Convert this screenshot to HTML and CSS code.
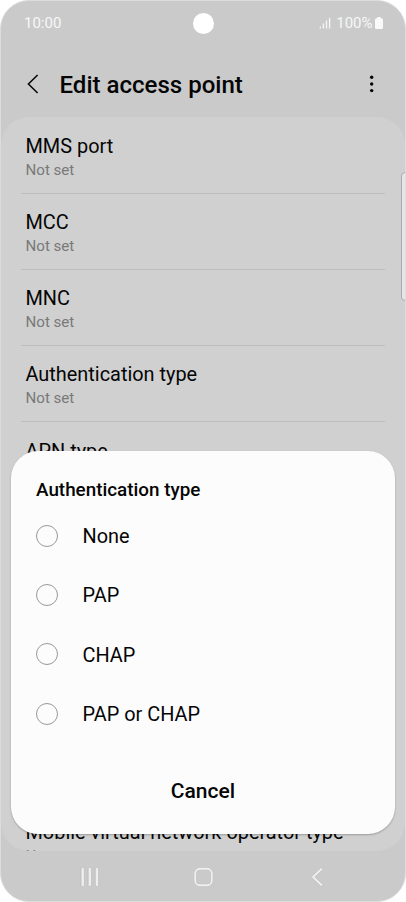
FILE: index.html
```
<!DOCTYPE html>
<html lang="en">
<head>
<meta charset="utf-8">
<title>Edit access point</title>
<link rel="stylesheet" href="styles.css">
</head>
<body>
<div class="phone">
  <header class="status">
    <span class="clock">10:00</span>
    <span class="camera"></span>
    <span class="indicators">
      <svg class="signal" width="12" height="12" viewBox="0 0 12 12"><path d="M1.3 9.5V11.500M4.400 6.500V11.500M7.500 3.500V11.500M10.600 0.800V11.500" stroke="#f7f7f7" stroke-width="1.3"/></svg>
      <span class="percent">100%</span>
      <svg class="battery" width="8" height="12" viewBox="0 0 8 12"><path d="M2.4 0h3.2v1.2H6.5A1.5 1.5 0 0 1 8 2.7v7.8A1.5 1.5 0 0 1 6.5 12h-5A1.5 1.5 0 0 1 0 10.5V2.7A1.5 1.5 0 0 1 1.5 1.2H2.4z" fill="#fafafa"/></svg>
    </span>
  </header>
  <div class="toolbar">
    <svg class="back" width="14" height="22" viewBox="0 0 14 22"><path d="M11.6 2L2.4 11l9.2 9" fill="none" stroke="#050505" stroke-width="1.5"/></svg>
    <h1>Edit access point</h1>
    <svg class="more" width="6" height="18" viewBox="0 0 6 18"><g fill="#050505"><circle cx="2.700" cy="2.3" r="1.7"/><circle cx="2.700" cy="9" r="1.7"/><circle cx="2.700" cy="15.6" r="1.7"/></g></svg>
  </div>
  <main class="list">
    <div class="row"><span class="name">MMS port</span><span class="value">Not set</span></div>
    <div class="row"><span class="name">MCC</span><span class="value">Not set</span></div>
    <div class="row"><span class="name">MNC</span><span class="value">Not set</span></div>
    <div class="row"><span class="name">Authentication type</span><span class="value">Not set</span></div>
    <div class="row"><span class="name">APN type</span></div>
    <div class="row"></div>
    <div class="row"></div>
    <div class="row"></div>
    <div class="row"></div>
    <div class="row"><span class="name">Mobile virtual network operator type</span><span class="value">Not set</span></div>
  </main>
  <nav class="navbar">
    <svg width="20" height="20" viewBox="0 0 20 20"><g fill="#eee" stroke="#b5b5b5" stroke-width=".6"><rect x="1.1" y=".6" width="3.3" height="18.8" rx="1"/><rect x="8.2" y=".6" width="3.3" height="18.8" rx="1"/><rect x="15.3" y=".6" width="3.3" height="18.8" rx="1"/></g></svg>
    <svg width="20" height="20" viewBox="0 0 20 20"><rect x="1.2" y="1.7" width="16.6" height="16.6" rx="4.8" fill="none" stroke="#b8b8b8" stroke-width="2.6"/><rect x="1.2" y="1.7" width="16.6" height="16.6" rx="4.8" fill="none" stroke="#f0f0f0" stroke-width="1.9"/></svg>
    <svg width="20" height="20" viewBox="0 0 20 20"><g fill="none" stroke-linecap="round" stroke-linejoin="round"><path d="M13.5 2L5 10l8.5 8" stroke="#b8b8b8" stroke-width="2.7"/><path d="M13.5 2L5 10l8.5 8" stroke="#f0f0f0" stroke-width="1.9"/></g></svg>
  </nav>
  <div class="edge-handle"></div>
  <section class="dialog" role="dialog">
    <h2>Authentication type</h2>
    <div class="options">
      <div class="option"><span class="radio"></span><span>None</span></div>
      <div class="option"><span class="radio"></span><span>PAP</span></div>
      <div class="option"><span class="radio"></span><span>CHAP</span></div>
      <div class="option"><span class="radio"></span><span>PAP or CHAP</span></div>
    </div>
    <div class="cancel">Cancel</div>
  </section>
</div>
</body>
</html>
```
FILE: styles.css
```
* { box-sizing: border-box; }
body {
  margin: 0;
  background: #fff;
  font-family: Roboto, "Liberation Sans", sans-serif;
  color: #050505;
}
.phone {
  position: relative;
  display: flex;
  flex-direction: column;
  width: 406px;
  height: 902px;
  overflow: hidden;
  background: #cacaca;
  border: 1px solid #dcdcdc;
  border-radius: 29px;
}
.status {
  display: grid;
  grid-template-columns: 1fr 21px 1fr;
  align-items: center;
  height: 44px;
  padding: 0 22.5px 0 23px;
  color: #f7f7f7;
  font-size: 15px;
}
.camera {
  width: 21px;
  height: 21px;
  margin-top: 1px;
  border-radius: 50%;
  background: #fff;
}
.indicators {
  display: flex;
  justify-content: flex-end;
  align-items: center;
}
.signal { margin-right: 5px; }
.battery { margin-left: 2px; }
.toolbar {
  display: flex;
  align-items: center;
  height: 72.5px;
  padding: 9px 29px 0 25px;
}
.back { margin-top: -2px; }
h1 {
  margin: 0 0 0 19.5px;
  font-size: 24.05px;
  line-height: 30px;
  font-weight: 500;
}
.more { margin: -2px 1px 0 auto; }
.list {
  height: 734px;
  flex: none;
  overflow: hidden;
  padding: 0 20px;
  background: #d0d0d0;
  border-radius: 28px;
}
.row {
  display: flex;
  flex-direction: column;
  height: 76.25px;
  padding: 17.2px 4.5px 0;
  border-bottom: 1px solid #bdbdbd;
}
.name { font-size: 19.9px; line-height: 24px; white-space: nowrap; }
.value { margin-top: 2px; font-size: 15.1px; line-height: 18px; color: #797979; }
.navbar {
  display: flex;
  justify-content: center;
  align-items: center;
  gap: 94px;
  height: 50px;
  padding: 2px 0 0 1px;
}
.toolbar + .list { margin-top: .5px; }
.edge-handle {
  position: absolute;
  top: 171px;
  right: -4px;
  width: 8px;
  height: 129px;
  background: #e6e6e6;
  border: 1px solid #aaa;
  border-radius: 4px;
}
.dialog {
  position: absolute;
  left: 10px;
  top: 450px;
  width: 384px;
  height: 383px;
  padding: 27px 25px 0;
  background: #fcfcfc;
  border-radius: 27px;
  box-shadow: 0 1px 2px rgba(0, 0, 0, .25);
}
h2 {
  margin: 0;
  font-size: 18.85px;
  line-height: 24px;
  font-weight: 500;
}
.options { margin-top: 4px; }
.option {
  display: flex;
  align-items: center;
  gap: 25px;
  height: 59.4px;
  font-size: 19.9px;
}
.option span:last-child { padding-top: 1.5px; }
.radio {
  width: 22px;
  height: 22px;
  margin-left: -.5px;
  border: 1px solid #999;
  border-radius: 50%;
}
.cancel {
  margin-top: 35px;
  text-align: center;
  font-size: 21px;
  line-height: 24px;
  font-weight: 500;
}
```
